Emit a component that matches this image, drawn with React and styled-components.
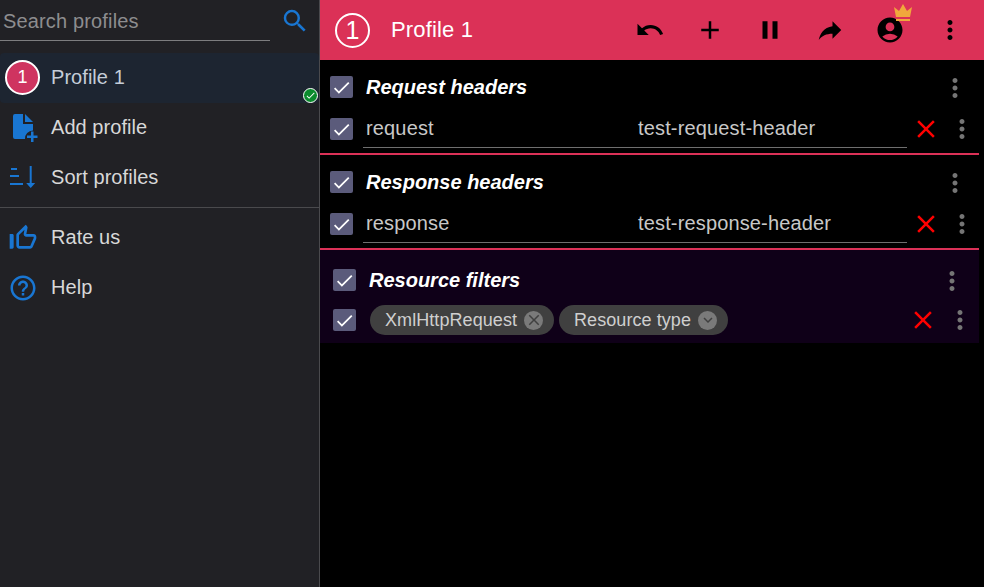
import styled, { createGlobalStyle } from 'styled-components'
import { MdUndo, MdAdd, MdPause, MdReply, MdAccountCircle, MdMoreVert, MdSearch, MdHelpOutline, MdThumbUpOffAlt, MdClose, MdExpandMore, MdCheck } from 'react-icons/md'

const GlobalStyle = createGlobalStyle`
html, body, #root {
    margin: 0;
    height: 100%;
}
body {
    background: #000;
    font-family: "Liberation Sans", Arial, sans-serif;
    letter-spacing: 0.15px;
}
`

const Page = styled('div')`
display: flex;
width: 984px;
height: 587px;
overflow: hidden;
`

const Sidebar = styled('aside')`
width: 319px;
flex-shrink: 0;
background: #212125;
border-right: 1px solid #4a4a4d;
`

const SearchBar = styled('div')`
display: flex;
align-items: center;
height: 52.6px;
`

const SearchInput = styled('div')`
width: 267px;
height: 40px;
margin-bottom: 12px;
padding-left: 3px;
border-bottom: 1px solid #7d7d7f;
color: #8d8d8f;
font-size: 20px;
line-height: 42px;
`

const SearchButton = styled('div')`
display: flex;
margin-left: 10px;
margin-bottom: 11px;
color: #1976d2;
font-size: 30px;
`

const MenuItem = styled('div')`
position: relative;
display: flex;
align-items: center;
height: 50px;
color: ${props => props.$active ? '#c5cdd8' : '#d8d8d8'};
background: ${props => props.$active ? '#1d2531' : 'transparent'};
border-radius: ${props => props.$active ? '4px' : '0'};
font-size: 20px;
letter-spacing: 0.05px;
`

const MenuIcon = styled('div')`
display: flex;
align-items: center;
justify-content: center;
width: 46px;
margin-right: 5px;
color: #1976d2;
`

const ProfileBadge = styled('div')`
display: flex;
align-items: center;
justify-content: center;
width: 31px;
height: 31px;
margin-left: 5px;
margin-right: 11px;
border: 2px solid #fff;
border-radius: 50%;
background: #cf3460;
color: #fff;
font-size: 18px;
`

const ActiveDot = styled('div')`
position: absolute;
right: 1px;
bottom: 0;
display: flex;
align-items: center;
justify-content: center;
width: 13px;
height: 13px;
border: 1px solid #fff;
border-radius: 50%;
background: #0a8a2c;
color: #fff;
font-size: 11px;
`

const Divider = styled('div')`
height: 1px;
margin: 4.4px 0 5px;
background: #4a4a4d;
`

const Main = styled('main')`
flex: 1;
min-width: 0;
`

const Header = styled('header')`
display: flex;
align-items: center;
height: 60px;
padding-right: 4px;
background: #db3157;
color: #fff;
`

const HeaderBadge = styled('div')`
display: flex;
align-items: center;
justify-content: center;
width: 31px;
height: 31px;
margin-left: 15px;
border: 2px solid #fff;
border-radius: 50%;
font-size: 25px;
`

const HeaderTitle = styled('div')`
flex: 1;
margin-left: 21px;
font-size: 22px;
`

const HeaderButton = styled('div')`
position: relative;
display: flex;
align-items: center;
justify-content: center;
width: 60px;
height: 60px;
color: #000;
font-size: 30px;
`

const RedoIcon = styled(MdReply)`
transform: scaleX(-1);
`

const Crown = styled('svg')`
position: absolute;
left: 33px;
top: 4px;
width: 20px;
height: 18px;
`

const Section = styled('section')`
box-sizing: border-box;
width: 659px;
padding: ${props => props.$filter ? '15px 0 2px 3px' : '12px 0 3px'};
background: ${props => props.$filter ? '#0f0018' : 'transparent'};
`

const Separator = styled('div')`
width: 659px;
height: 2px;
background: #db3157;
`

const TitleRow = styled('div')`
display: flex;
align-items: center;
height: 30px;
padding: 0 ${props => props.$end}px 0 10px;
`

const ItemRow = styled('div')`
display: flex;
align-items: center;
height: 42px;
margin-top: ${props => props.$top}px;
padding: 0 ${props => props.$end}px 0 10px;
`

const Checkbox = styled('div')`
display: flex;
align-items: center;
justify-content: center;
flex-shrink: 0;
width: 23px;
height: 22px;
border-radius: 2px;
background: #5b5b7b;
color: #fff;
font-size: 21px;
`

const SectionTitle = styled('div')`
flex: 1;
margin-left: 13px;
color: #fff;
font-size: 20px;
font-style: italic;
font-weight: bold;
letter-spacing: 0;
`

const Field = styled('div')`
display: flex;
align-items: center;
width: 544px;
height: 38px;
margin-left: 10px;
padding-left: 3px;
box-sizing: border-box;
border-bottom: 1px solid #6f6f6f;
color: #c8c8c8;
font-size: 20px;
`

const FieldName = styled('div')`
width: 272px;
`

const RemoveButton = styled('div')`
display: flex;
margin-left: 4px;
color: #f00;
font-size: 30px;
`

const MoreButton = styled('div')`
display: flex;
color: #757575;
font-size: 30px;
margin-left: ${props => props.$gap || 0}px;
margin-top: ${props => props.$drop || 0}px;
`

const Chips = styled('div')`
flex: 1;
display: flex;
gap: 5px;
margin-left: 14px;
`

const Chip = styled('div')`
display: flex;
align-items: center;
height: 30px;
padding: 0 11px 0 15px;
border-radius: 15px;
background: #404040;
color: #cfcfcf;
font-size: 18px;
letter-spacing: 0.07px;
`

const ChipIcon = styled('div')`
display: flex;
align-items: center;
justify-content: center;
width: 19px;
height: 19px;
margin-left: 7px;
border-radius: 50%;
background: #7a7a7a;
color: #404040;
font-size: 18px;
`

const Check = () => (
    <Checkbox><MdCheck /></Checkbox>
)

function HeaderSection({ title, name, value }) {
    return (
        <Section>
            <TitleRow $end={9}>
                <Check />
                <SectionTitle>{title}</SectionTitle>
                <MoreButton $drop={2}><MdMoreVert /></MoreButton>
            </TitleRow>
            <ItemRow $top={6} $end={2}>
                <Check />
                <Field>
                    <FieldName>{name}</FieldName>
                    {value}
                </Field>
                <RemoveButton><MdClose /></RemoveButton>
                <MoreButton $gap={6}><MdMoreVert /></MoreButton>
            </ItemRow>
        </Section>
    )
}

function App() {
    return (
        <Page>
            <GlobalStyle />
            <Sidebar>
                <SearchBar>
                    <SearchInput>Search profiles</SearchInput>
                    <SearchButton><MdSearch /></SearchButton>
                </SearchBar>
                <MenuItem $active>
                    <ProfileBadge>1</ProfileBadge>
                    Profile 1
                    <ActiveDot><MdCheck /></ActiveDot>
                </MenuItem>
                <MenuItem>
                    <MenuIcon>
                        <svg width="30" height="30" viewBox="0 0 30 30" fill="currentColor">
                            <path d="M7 1h8v10h10v6.500a8 8 0 0 0-8 8.500H7a2 2 0 0 1-2-2V3a2 2 0 0 1 2-2z" />
                            <path d="M17 1l8 8h-8z" />
                            <path d="M23 18.500h2.500v4H29.500v2.500h-4v4H23v-4h-4v-2.500h4z" />
                        </svg>
                    </MenuIcon>
                    Add profile
                </MenuItem>
                <MenuItem>
                    <MenuIcon>
                        <svg width="30" height="30" viewBox="0 0 30 30" fill="currentColor">
                            <rect x="3" y="5" width="6" height="2" />
                            <rect x="2" y="12" width="9" height="2" />
                            <rect x="2" y="20" width="13" height="2" />
                            <path d="M21.700 3h2v17h3.500l-4.500 5-4.500-5h3.500z" />
                        </svg>
                    </MenuIcon>
                    Sort profiles
                </MenuItem>
                <Divider />
                <MenuItem>
                    <MenuIcon><MdThumbUpOffAlt size={32} /></MenuIcon>
                    Rate us
                </MenuItem>
                <MenuItem>
                    <MenuIcon><MdHelpOutline size={30} /></MenuIcon>
                    Help
                </MenuItem>
            </Sidebar>
            <Main>
                <Header>
                    <HeaderBadge>1</HeaderBadge>
                    <HeaderTitle>Profile 1</HeaderTitle>
                    <HeaderButton><MdUndo /></HeaderButton>
                    <HeaderButton><MdAdd /></HeaderButton>
                    <HeaderButton><MdPause /></HeaderButton>
                    <HeaderButton><RedoIcon /></HeaderButton>
                    <HeaderButton>
                        <MdAccountCircle />
                        <Crown viewBox="0 0 20 18">
                            <path fill="#f0a83c" d="M1 3l5 4 4-7 4 7 5-4-2 10H3z" />
                            <rect fill="#f0a83c" x="3" y="15" width="14" height="2" />
                        </Crown>
                    </HeaderButton>
                    <HeaderButton><MdMoreVert /></HeaderButton>
                </Header>
                <HeaderSection title="Request headers" name="request" value="test-request-header" />
                <Separator />
                <HeaderSection title="Response headers" name="response" value="test-response-header" />
                <Separator />
                <Section $filter>
                    <TitleRow $end={12}>
                        <Check />
                        <SectionTitle>Resource filters</SectionTitle>
                        <MoreButton $drop={1}><MdMoreVert /></MoreButton>
                    </TitleRow>
                    <ItemRow $top={4} $end={4}>
                        <Check />
                        <Chips>
                            <Chip>XmlHttpRequest<ChipIcon><MdClose /></ChipIcon></Chip>
                            <Chip>Resource type<ChipIcon><MdExpandMore /></ChipIcon></Chip>
                        </Chips>
                        <RemoveButton><MdClose /></RemoveButton>
                        <MoreButton $gap={7}><MdMoreVert /></MoreButton>
                    </ItemRow>
                </Section>
            </Main>
        </Page>
    )
}

export default App
